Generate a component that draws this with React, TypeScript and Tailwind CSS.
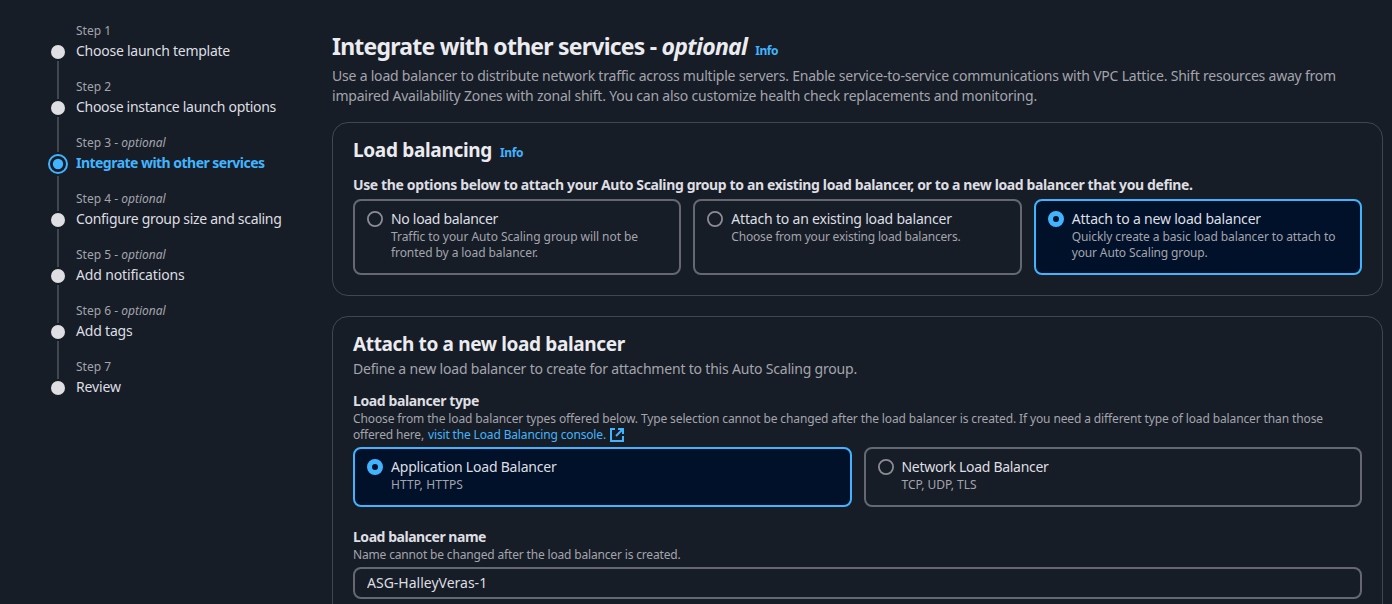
import type { ReactNode } from "react";

type Step = { n: number; optional?: boolean; title: string; active?: boolean; tracking: string };

const steps: Step[] = [
  { n: 1, title: "Choose launch template", tracking: "tracking-[-0.251px]" },
  { n: 2, title: "Choose instance launch options", tracking: "tracking-[-0.294px]" },
  { n: 3, optional: true, title: "Integrate with other services", active: true, tracking: "tracking-[-0.53px]" },
  { n: 4, optional: true, title: "Configure group size and scaling", tracking: "tracking-[-0.301px]" },
  { n: 5, optional: true, title: "Add notifications", tracking: "tracking-[-0.15px]" },
  { n: 6, optional: true, title: "Add tags", tracking: "tracking-[-0.191px]" },
  { n: 7, title: "Review", tracking: "tracking-[-0.111px]" },
];

function StepMarker({ active }: { active?: boolean }) {
  if (active) {
    return (
      <svg className="h-5 w-5 shrink-0" viewBox="0 0 20 20">
        <circle cx="10" cy="10" r="9" fill="none" stroke="#42b4ff" strokeWidth="2" />
        <circle cx="10" cy="10" r="5.2" fill="#42b4ff" />
      </svg>
    );
  }
  return <span className="h-3.5 w-3.5 shrink-0 rounded-full bg-[#dedee3]" />;
}

function StepRow({ step }: { step: Step }) {
  const first = step.n === 1;
  return (
    <li className="flex h-14 gap-2">
      <div className="flex w-5 flex-col items-center">
        <span className={first ? "h-5 w-0.5" : step.active ? "h-[17px] w-0.5 bg-[#424650]" : "h-5 w-0.5 bg-[#424650]"} />
        <span className="my-0.5 flex">
          <StepMarker active={step.active} />
        </span>
        {step.n < 7 && <span className="w-0.5 grow bg-[#424650]" />}
      </div>
      <div className="whitespace-nowrap">
        <div className="text-xs leading-4 text-[#a4a4ad]">
          Step {step.n}
          {step.optional && (
            <>
              {" - "}
              <i>optional</i>
            </>
          )}
        </div>
        <div
          className={`mt-0.5 text-sm leading-5 ${step.tracking} ${step.active ? "font-bold text-[#42b4ff]" : "text-[#dedee3]"}`}
        >
          {step.title}
        </div>
      </div>
    </li>
  );
}

function Info() {
  return (
    <a href="#" className="text-xs font-bold tracking-[-0.4px] text-[#42b4ff]">
      Info
    </a>
  );
}

function Card({ children }: { children: ReactNode }) {
  return (
    <section className="rounded-2xl border border-[#424650] px-5 pt-[15px] pb-5">{children}</section>
  );
}

function Radio({ checked }: { checked?: boolean }) {
  return (
    <svg className="mt-0.5 h-4 w-4 shrink-0" viewBox="0 0 16 16">
      {checked ? (
        <circle cx="8" cy="8" r="5.5" fill="#001129" stroke="#42b4ff" strokeWidth="5" />
      ) : (
        <circle cx="8" cy="8" r="7.1" fill="none" stroke="#8c8c94" strokeWidth="1.8" />
      )}
    </svg>
  );
}

function Tile({
  title,
  titleTracking,
  checked,
  children,
}: {
  title: string;
  titleTracking: string;
  checked?: boolean;
  children: ReactNode;
}) {
  return (
    <label
      className={`flex gap-2 rounded-lg border-2 px-3 pt-2 pb-3 ${checked ? "border-[#42b4ff] bg-[#001129]" : "border-[#656871]"}`}
    >
      <Radio checked={checked} />
      <div className="whitespace-nowrap">
        <div className={`text-sm leading-5 text-[#dedee3] ${titleTracking}`}>{title}</div>
        <div className="text-xs leading-4 text-[#a4a4ad]">{children}</div>
      </div>
    </label>
  );
}

export default function App() {
  return (
    <div className="flex h-[604px] w-[1392px] overflow-hidden bg-[#161d26] font-['Noto_Sans',sans-serif]">
      <nav className="w-[332px] shrink-0 pt-[23px] pl-12">
        <ol>
          {steps.map((s) => (
            <StepRow key={s.n} step={s} />
          ))}
        </ol>
      </nav>

      <main className="w-[1051px] shrink-0 pt-[31px] whitespace-nowrap">
        <div className="flex items-baseline gap-2">
          <h1 className="text-[23px] leading-[30px] font-bold tracking-[-0.77px] text-[#ebebf0]">
            Integrate with other services - <i className="tracking-[-0.72px]">optional</i>
          </h1>
          <Info />
        </div>
        <p className="mt-[5px] mb-4 text-sm leading-5 text-[#a4a4ad]">
          <span className="block tracking-[-0.209px]">
            Use a load balancer to distribute network traffic across multiple servers. Enable service-to-service
            communications with VPC Lattice. Shift resources away from
          </span>
          <span className="block tracking-[-0.216px]">
            impaired Availability Zones with zonal shift. You can also customize health check replacements and
            monitoring.
          </span>
        </p>

        <div className="flex flex-col gap-5">
          <Card>
            <div className="flex items-baseline gap-2">
              <h2 className="text-[19px] leading-6 font-bold tracking-[-0.32px] text-[#ebebf0]">Load balancing</h2>
              <Info />
            </div>
            <div className="mt-[13px] mb-1 text-sm leading-5 font-bold tracking-[-0.372px] text-[#dedee3]">
              Use the options below to attach your Auto Scaling group to an existing load balancer, or to a new load
              balancer that you define.
            </div>
            <div className="grid grid-cols-3 gap-3">
              <Tile title="No load balancer" titleTracking="tracking-[-0.307px]">
                <span className="block tracking-[-0.059px]">Traffic to your Auto Scaling group will not be</span>
                <span className="block tracking-[-0.077px]">fronted by a load balancer.</span>
              </Tile>
              <Tile title="Attach to an existing load balancer" titleTracking="tracking-[-0.194px]">
                <span className="block tracking-[-0.19px]">Choose from your existing load balancers.</span>
              </Tile>
              <Tile checked title="Attach to a new load balancer" titleTracking="tracking-[-0.185px]">
                <span className="block tracking-[-0.1px]">Quickly create a basic load balancer to attach to</span>
                <span className="block tracking-[-0.134px]">your Auto Scaling group.</span>
              </Tile>
            </div>
          </Card>

          <Card>
            <h2 className="text-[19px] leading-6 font-bold tracking-[-0.36px] text-[#ebebf0]">
              Attach to a new load balancer
            </h2>
            <p className="mt-[3px] text-sm leading-5 tracking-[-0.196px] text-[#a4a4ad]">
              Define a new load balancer to create for attachment to this Auto Scaling group.
            </p>

            <div className="mt-3 text-sm leading-5 font-bold tracking-[-0.394px] text-[#dedee3]">
              Load balancer type
            </div>
            <div className="mb-1 text-xs leading-4 text-[#a4a4ad]">
              <div className="tracking-[-0.121px]">
                Choose from the load balancer types offered below. Type selection cannot be changed after the load
                balancer is created. If you need a different type of load balancer than those
              </div>
              <div className="flex">
                <span className="mr-1 tracking-[-0.166px]">offered here,</span>
                <a href="#" className="flex gap-[3px] tracking-[-0.151px] text-[#42b4ff]">
                  visit the Load Balancing console.
                  <svg className="h-4 w-4" viewBox="0 0 16 16" fill="none" stroke="currentColor" strokeWidth="2">
                    <path d="M9 2h5v5" />
                    <path d="m7 9 7-7" />
                    <path d="M14 9v5H2V2h4" />
                  </svg>
                </a>
              </div>
            </div>
            <div className="grid grid-cols-2 gap-3">
              <Tile checked title="Application Load Balancer" titleTracking="tracking-[-0.211px]">
                <span className="block tracking-[0.106px]">HTTP, HTTPS</span>
              </Tile>
              <Tile title="Network Load Balancer" titleTracking="tracking-[-0.302px]">
                <span className="block">TCP, UDP, TLS</span>
              </Tile>
            </div>

            <div className="mt-5 text-sm leading-5 font-bold tracking-[-0.462px] text-[#dedee3]">
              Load balancer name
            </div>
            <div className="mb-1 text-xs leading-4 tracking-[-0.165px] text-[#a4a4ad]">
              Name cannot be changed after the load balancer is created.
            </div>
            <input
              type="text"
              defaultValue="ASG-HalleyVeras-1"
              className="block h-8 w-full rounded-lg border-2 border-[#656871] bg-transparent px-3 pb-0.5 text-sm leading-5 tracking-[0px] text-[#dedee3] outline-none"
            />
            <div className="h-10" />
          </Card>
        </div>
      </main>
    </div>
  );
}
